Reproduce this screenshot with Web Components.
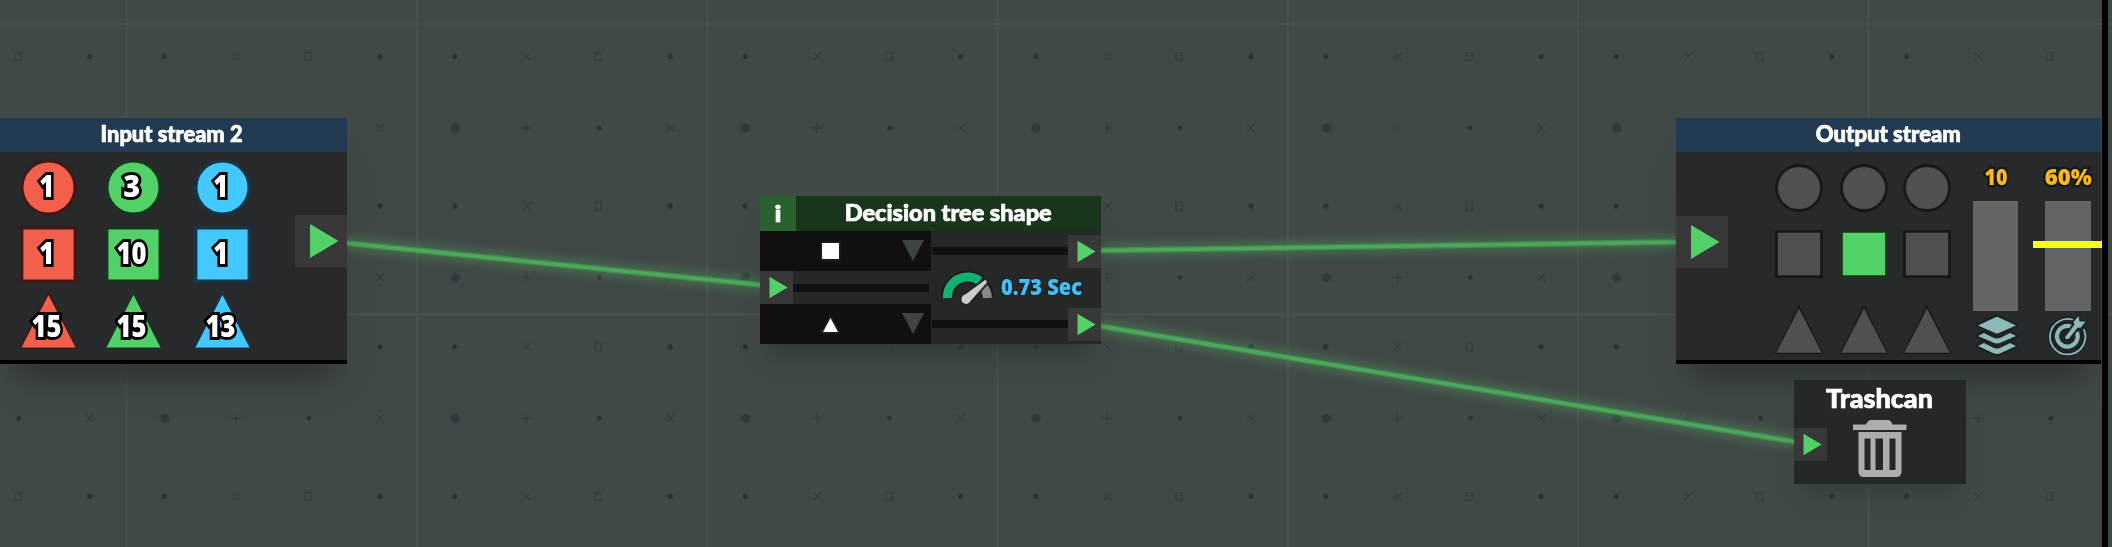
<!DOCTYPE html>
<html lang="en">
<head>
<meta charset="utf-8">
<title>Stream editor</title>
<style>
html,body{margin:0;height:100%;overflow:hidden;background:#414947}
body{font-family:Lato,"Open Sans",sans-serif;font-weight:900;color:#fff}
</style>
</head>
<body>
<stream-board></stream-board>
<script>
const define = (name, html, init) => {
  const tpl = document.createElement('template');
  tpl.innerHTML = html;
  customElements.define(name, class extends HTMLElement {
    connectedCallback() {
      if (this.shadowRoot) return;
      this.attachShadow({mode: 'open'}).append(tpl.content.cloneNode(true));
      if (init) init.call(this, this.shadowRoot);
    }
  });
};

/* A single line of text, condensed or widened to an exact width. */
define('fit-text', `<style>
:host{display:flex;justify-content:center;white-space:nowrap;line-height:1}
span{display:block;flex:none;transform-origin:50% 50%;-webkit-text-stroke:.7px currentColor}
:host([outline]) span{font-family:"Open Sans",Lato,sans-serif;font-weight:800;-webkit-text-stroke:var(--ow,6px) var(--oc,#000);paint-order:stroke fill;stroke-linejoin:round}
</style><span><slot></slot></span>`, function (r) {
  const s = r.querySelector('span');
  this.style.fontSize = this.getAttribute('size') + 'px';
  const w = +this.getAttribute('w');
  this.style.width = w + 'px';
  s.style.transform = `scaleX(${w / s.getBoundingClientRect().width})`;
});

/* Connection port with a play arrow. */
define('node-port', `<style>
:host{display:flex;flex:none;width:33px;height:33px;background:#383838}
:host([large]){width:52px;height:52px}
svg{width:100%;height:100%}
</style><svg viewBox="0 0 52 52"><path d="M15 9L43.500 26L15 43z" fill="#53d169"/></svg>`);

/* Circle, square or triangle token, with an optional count on it. */
define('shape-token', `<style>
:host{display:grid;width:var(--s,57px);height:var(--s,57px)}
svg{grid-area:1/1;width:100%;height:100%;overflow:visible}
div{grid-area:1/1;display:grid;place-items:center;padding:0 3px 3px 0}
:host([kind=triangle]) div{padding-top:14px}
</style><svg viewBox="0 0 57 57"></svg><div><slot></slot></div>`, function (r) {
  const k = this.getAttribute('kind'), c = this.getAttribute('color') || '#505050';
  const dark = {'#f2604c':'#3b1a17','#53d169':'#1a351f','#43c8ff':'#163545'}[c] || '#171818';
  r.querySelector('svg').innerHTML = k === 'circle'
    ? `<circle cx="28.500" cy="28.500" r="26.700" fill="${c}" stroke="${dark}" stroke-width="3.400"/>`
    : k === 'square'
    ? `<path d="M1.700 1.700h53.600v53.600H1.700z" fill="${c}" stroke="${dark}" stroke-width="3.400"/>`
    : `<path d="M28.500 1L56 56H1z" fill="${dark}" stroke="${dark}" stroke-width="2"/><path d="M28.500 3L55.500 55.500H1.500z" fill="${c}"/>`;
});

/* Large stream panel: blue title bar, body and black foot. */
define('stream-node', `<style>
:host{display:flex;flex-direction:column;box-sizing:border-box;height:246px;background:#27292b;border-bottom:4px solid #000;box-shadow:0 30px 26px -14px #2b302ecc}
header{flex:none;height:34px;background:#233b52;display:flex;justify-content:center;padding-top:5px;box-sizing:border-box}
main{flex:1;display:flex;position:relative}
</style><header><slot name="title"></slot></header><main><slot></slot></main>`);

define('input-stream', `<style>
:host{display:block}
stream-node{width:347px}
.grid{display:grid;grid-template:66.500px 66px 57px/85px 89px 57px;margin:7px 0 0 20px;align-content:start}
.port{margin:63px 0 0 auto}
fit-text[slot]{margin-right:3px}
</style>
<stream-node><fit-text slot="title" size="22" w="142">Input stream 2</fit-text>
<div class="grid"></div><node-port class="port" large></node-port></stream-node>`, function (r) {
  const cols = ['#f2604c', '#53d169', '#43c8ff'];
  const rows = [['circle', 1, 3, 1], ['square', 1, 10, 1], ['triangle', 15, 15, 13]];
  r.querySelector('.grid').innerHTML = rows.map(([k, ...n]) => n.map((v, i) =>
    `<shape-token kind="${k}" color="${cols[i]}"><fit-text outline size="30" w="${v > 9 ? 30 : v > 1 ? 17 : 15}">${v}</fit-text></shape-token>`).join('')).join('');
});

define('output-stream', `<style>
:host{display:block}
stream-node{width:425px}
.port{margin-top:64px}
.grid{--s:48px;display:grid;grid-template:66px 76px 48px/65px 63px 48px;margin:12px 0 0 47px;align-content:start}
.meter{display:flex;flex-direction:column;align-items:center;margin:13px 0 0 22px;width:45px;color:#ffb81c;--oc:#161a1b;--ow:5px}
.meter+.meter{width:46px;margin-left:27px}
.bar{width:100%;height:110px;margin-top:14px;background:#626667}
.meter+.meter .bar{background:#636466;display:flex;flex-direction:column}
.mark{height:7px;margin:40px -11px 0 -12px;background:#f4ff20}
.meter svg{width:46px;height:46px;margin-top:1px;flex:none}
</style>
<stream-node><fit-text slot="title" size="22" w="145">Output stream</fit-text>
<node-port class="port" large></node-port><div class="grid"></div>
<div class="meter"><fit-text outline size="22" w="23">10</fit-text><div class="bar"></div>
<svg viewBox="0 0 46 46"><g fill="#8fb8b9" stroke="#1d2222" stroke-width="5" paint-order="stroke" stroke-linejoin="round"><path d="M24 5Q25 5 27 6L43 13.500L27 20.500Q25 21.500 24 21.500T21 20.500L5 13.500L21 6Q23 5 24 5z"/><path d="M5 24L11 21L20 25.500Q24 27.500 28 25.500L37 21L43 24L28 30.500Q24 32.500 20 30.500z"/><path d="M5 34L11 31L20 35.500Q24 37.500 28 35.500L37 31L43 34L28 41Q24 43 20 41z"/></g></svg></div>
<div class="meter"><fit-text outline size="22" w="47">60%</fit-text><div class="bar"><div class="mark"></div></div>
<svg viewBox="0 0 46 46"><circle cx="22.500" cy="24.500" r="20" fill="#1e2323"/><g fill="none" stroke="#8fb8b9"><path d="M29.500 8.400A17.700 17.700 0 1 0 38.700 17.200" stroke-width="1.800"/><path d="M27.700 15.500A10.300 10.300 0 1 0 31.700 20" stroke-width="4.200"/></g><g stroke="#1e2323" stroke-width="4" paint-order="stroke" fill="#8fb8b9"><path d="M21 24L29.500 12.500L28.500 10L33.500 4L34.500 9.500L40.500 9.500L36 15.500L32.500 15.700L24 26.500Q22 28 20.600 26.600T21 24z"/></g></svg></div>
</stream-node>`, function (r) {
  r.querySelector('.grid').innerHTML = ['circle', 'square', 'triangle'].map(k => [0, 1, 2].map(i =>
    `<shape-token kind="${k}"${k === 'square' && i === 1 ? ' color="#53d169"' : ''}></shape-token>`).join('')).join('');
});

define('decision-node', `<style>
:host{display:block;width:341px;height:148px;background:#252827;box-shadow:0 22px 20px -10px #2f3533b0}
header{display:flex;height:35px;background:#19351c}
.i{width:36px;display:grid;place-items:center;background:#296130}
.t{flex:1;display:flex;justify-content:center;padding:5px 0 0 0}
main{display:grid;grid-template-columns:171px 170px;height:113px}
.l,.r{display:flex;flex-direction:column}
.opt{height:40px;background:#101010;display:flex;align-items:center}
.opt svg{width:171px;height:40px}
.line{display:flex;align-items:center}
.line i{flex:1;height:8px;background:#0e1213}
.l .line{height:33px;padding-right:2px}
.r .line{height:33px;padding-left:1px}
.r{padding-top:3.500px;height:109px}
.mid{display:flex;height:40px;align-items:center}
.mid svg{width:58px;height:38px;margin-left:8px}
.mid fit-text{color:#43bff8;margin:0 0 3px 4px;--ow:3px;--oc:#1e2526}
</style>
<header><div class="i"><fit-text size="23" w="7">i</fit-text></div><div class="t"><fit-text size="23" w="207">Decision tree shape</fit-text></div></header>
<main><div class="l">
<div class="opt"><svg viewBox="0 0 171 40"><path d="M60.500 10.500h20v20h-20z" fill="#1c1c1c"/><path d="M62 12h17v16H62z" fill="#fff"/><path d="M142 9h22L153 30z" fill="#3e4344"/></svg></div>
<div class="line"><node-port></node-port><i></i></div>
<div class="opt"><svg viewBox="0 0 171 40"><path d="M70.500 14L78 28H63z" fill="#fff" stroke="#1c1c1c" stroke-width="4" paint-order="stroke"/><path d="M142 9h22L153 30z" fill="#3e4344"/></svg></div>
</div><div class="r">
<div class="line"><i></i><node-port></node-port></div>
<div class="mid"><svg viewBox="0 0 58 38"><g fill="none"><path d="M8.500 28A20 20 0 0 1 48.500 28" stroke="#1b1e1e" stroke-width="13"/><path d="M8.500 29A20 20 0 0 1 40.600 12" stroke="#10b171" stroke-width="9"/><path d="M43.500 16.500Q48 22 48.500 29" stroke="#8a8a8a" stroke-width="9"/></g><path d="M46 11Q48.500 11.500 47.500 14L32 31.500Q29.500 35.500 26 34.800Q21 33 23 28Q24 26 27 25z" fill="#ccc" stroke="#222525" stroke-width="4" paint-order="stroke"/></svg><fit-text outline size="22" w="81">0.73 Sec</fit-text></div>
<div class="line"><i></i><node-port></node-port></div>
</div></main>`);

define('trash-node', `<style>
:host{display:grid;grid-template-columns:33px 1fr 33px;grid-template-rows:37px 67px;width:172px;height:104px;background:#252827;box-shadow:0 16px 18px -9px #2f3533b0}
fit-text{grid-column:1/4;justify-self:center;margin-top:5px}
node-port{margin-top:11px}
svg{width:54px;height:58px;justify-self:center;margin:3px 1px 0 0}
</style><fit-text size="26" w="107">Trashcan</fit-text><node-port></node-port>
<svg viewBox="0 0 54 58"><path fill="#adadad" fill-rule="evenodd" d="M0 4.500H13Q15 0 18 0H35Q38 0 39.500 4.500H53.500V10H0zM5.500 12H48.500V52Q48 57 43.500 57H10.500Q6 57 5.500 52zM11.500 18.500V50H17.500V18.500zM22.500 18.500V50H30V18.500zM36.500 18.500V50H42.500V18.500z"/></svg>`);

/* Free canvas: patterned ground, wires and the nodes placed on it. */
define('stream-board', `<style>
:host{display:block;position:relative;width:2112px;height:547px;overflow:hidden;background:#414947}
.ground,.wires{position:absolute;inset:0;width:2112px;height:547px}
input-stream,output-stream,decision-node,trash-node{position:absolute}
input-stream{left:0;top:118px}
output-stream{left:1676px;top:118px}
decision-node{left:760px;top:196px}
trash-node{left:1794px;top:380px}
.edge{position:absolute;left:2102px;top:0;width:6px;height:547px;background:#000}
</style>
<svg class="ground"><defs>
<pattern id="tile" x="125.500" y="23" width="290.330" height="290.330" patternUnits="userSpaceOnUse">
<path d="M1 0V291M0 1H291" stroke="#495150" stroke-width="2" fill="none"/>
<g id="a" fill="none" stroke="#2d3e40" stroke-width="1.500">
<g fill="#253335" stroke="none"><circle cx="254.500" cy="33.500" r="2.600"/><circle cx="39" cy="33.500" r="2.600"/></g>
<path d="M107 29.500l8 8m0-8l-8 8M179.500 29.500h6v8h-6z"/></g>
<use href="#a" y="149.500"/>
<g id="b" fill="none" stroke="#2d3e40" stroke-width="1.500">
<path d="M250.500 101l8 8m0-8l-8 8M105.500 105h10m-5-5v10"/>
<circle cx="39.500" cy="105" r="4.700" fill="#2d3b3c" stroke="#354244"/><circle cx="183.500" cy="105" r="2.400" fill="#253335" stroke="none"/></g>
<use href="#b" y="149.500"/>
</pattern></defs><rect width="2112" height="547" fill="url(#tile)"/></svg>
<svg class="wires"><defs><filter id="glow" filterUnits="userSpaceOnUse" x="0" y="0" width="2112" height="547"><feGaussianBlur stdDeviation="5"/></filter>
<path id="w" d="M345 243L762 285M1099 250.500L1678 242M1099 326L1796 442"/></defs>
<use href="#w" stroke="#4ea95c" stroke-width="12" opacity=".4" filter="url(#glow)"/>
<use href="#w" stroke="#438853" stroke-width="6"/><use href="#w" stroke="#4ea85c" stroke-width="3.500"/></svg>
<input-stream></input-stream><decision-node></decision-node><output-stream></output-stream><trash-node></trash-node>
<div class="edge"></div>`);
</script>
</body>
</html>
